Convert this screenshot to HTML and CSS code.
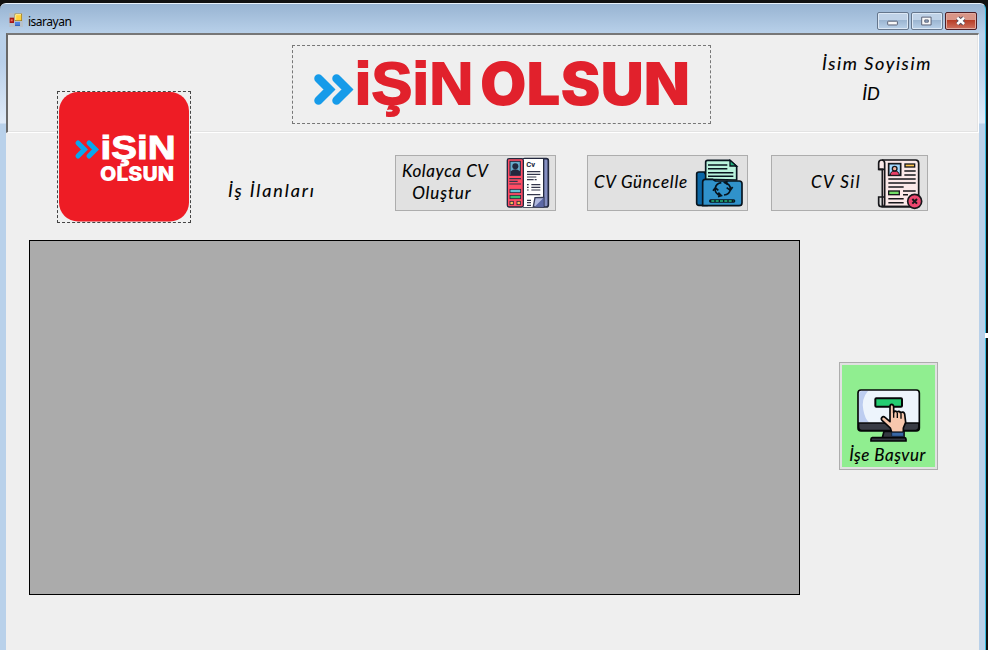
FILE: index.html
```html
<!DOCTYPE html>
<html lang="tr">
<head>
<meta charset="utf-8">
<title>isarayan</title>
<link rel="stylesheet" href="styles.css">
</head>
<body>
<div class="window">
  <div class="titlebar">
    <svg class="form-icon" viewBox="0 0 42 42"><rect width="42" height="42" fill="#bdbdbd" opacity=".6"/><rect x="2" y="14" width="13" height="16" fill="#a51616"/><rect x="5" y="19" width="6" height="6" fill="#ef6b5b"/><rect x="18" y="3" width="20" height="20" fill="#ffd23c" stroke="#9a7a17" stroke-width="2"/><path d="M20 21V5h16" stroke="#fff0a0" stroke-width="3" fill="none"/><rect x="18" y="27" width="15" height="11" fill="#4f83e0"/><path d="M18 37h15" stroke="#2558b8" stroke-width="3"/></svg>
    <span class="title">isarayan</span>
    <div class="controls">
      <span class="ctl"><svg viewBox="0 0 96 54"><rect x="31" y="26" width="31" height="12" rx="2" fill="#f8f8f8" stroke="#535b70" stroke-width="3"/></svg></span>
      <span class="ctl"><svg viewBox="0 0 96 54"><path d="M31 13h30v25H31zM41 22h11v7H41z" fill="#f8f8f8" fill-rule="evenodd" stroke="#535b70" stroke-width="3"/></svg></span>
      <span class="ctl close"><svg viewBox="0 0 96 54"><path d="M37 15L57 35M57 15L37 35" stroke="#574a5a" stroke-width="14"/><path d="M36 15L58 35M58 15L36 35" stroke="#fff" stroke-width="8"/></svg></span>
    </div>
  </div>
  <div class="client">
    <header class="header">
      <div class="brand">
        <svg viewBox="0 0 417 77">
          <g class="chevrons"><path d="M25.500 32.500l11 11-11 11M43.500 32.500l11 11-11 11"/></g>
          <g class="wordmark"><text class="slab" x="61.500" y="58" textLength="119" lengthAdjust="spacingAndGlyphs">iŞiN</text><text x="187" y="59" textLength="210" lengthAdjust="spacingAndGlyphs">OLSUN</text></g>
        </svg>
      </div>
      <div class="user"><span class="name">İsim Soyisim</span><span class="uid">İD</span></div>
    </header>
    <div class="app-logo">
      <svg viewBox="0 0 132 130">
        <rect x="1" y="0" width="130" height="129.500" rx="19" fill="#ee1c25"/>
        <path class="mini-chevrons" d="M20 51l6.500 6.500-6.500 6.500M31 51l6.500 6.500-6.500 6.500"/>
        <text class="mini-top" x="42.500" y="67" textLength="75" lengthAdjust="spacingAndGlyphs">iŞiN</text>
        <text class="mini-bottom" x="42" y="89" textLength="74" lengthAdjust="spacingAndGlyphs">OLSUN</text>
      </svg>
    </div>
    <div class="toolbar">
      <h1 class="heading">İş İlanları</h1>
      <button class="btn create"><span class="label"><span class="l1">Kolayca CV</span><span class="l2">Oluştur</span></span>
        <svg class="icon" viewBox="348 21 135 156" width="45" height="52">
          <rect x="398" y="26" width="77" height="145" rx="6" fill="#858fc2" stroke="#22283e" stroke-width="5"/>
          <path d="M399 27h62v116l-31 28h-31z" fill="#fff"/><path d="M461 27v143" stroke="#22283e" stroke-width="4"/>
          <path d="M430 170l5-27 26-1v29z" fill="#b0b9df" stroke="#343a57" stroke-width="4"/><path d="M434 170l27-27v28z" fill="#5c68a5"/>
          <rect x="352" y="26" width="48" height="145" rx="5" fill="#ff4c65" stroke="#22283e" stroke-width="4"/>
          <rect x="360" y="34" width="31" height="42" fill="#68aaca" stroke="#22283e" stroke-width="3"/><circle cx="376" cy="49" r="9" fill="#22283e"/><path d="M362 75V64q14-12 28 0v11z" fill="#22283e"/>
          <path d="M358 86h35M358 94h25M358 102h35M411 65h40M411 73h40M411 81h28M411 89h20M434 89h6M411 104h5M424 104h27M411 112h5M424 112h27M411 120h5M424 120h27M411 134h40M411 151h12M411 158h12M411 166h12" stroke="#33364b" stroke-width="3.500"/>
          <rect x="360" y="118" width="32" height="10" fill="#69bfd2" stroke="#22283e" stroke-width="2.500"/><rect x="360" y="136" width="32" height="10" fill="#37bd70" stroke="#22283e" stroke-width="2.500"/><rect x="360" y="154" width="10" height="10" fill="#ffbc55" stroke="#22283e" stroke-width="2.500"/><rect x="381" y="154" width="10" height="10" fill="#ffbc55" stroke="#22283e" stroke-width="2.500"/>
          <text class="cv" x="409" y="52">Cv</text>
        </svg></button>
      <button class="btn update"><span class="label">CV Güncelle</span>
        <svg class="icon" viewBox="345 27 147 150" width="49" height="50">
          <path d="M350 72q0-6 7-6h16l8 14v86h-24q-7 0-7-7z" fill="#0b67a5" stroke="#07141e" stroke-width="5"/>
          <path d="M377 88V36q0-5 6-5h67l20 19v40z" fill="#b9f3dc" stroke="#07141e" stroke-width="5"/><path d="M450 31v17h20z" fill="#20b07c" stroke="#07141e" stroke-width="4"/>
          <path d="M384 45h58M384 56h58M384 68h76M384 79h76" stroke="#07141e" stroke-width="4.500"/>
          <path d="M368 96q0-8 8-8h22l8 5h72q8 0 8 8v57q0 9-9 9H368z" fill="#3092cb" stroke="#07141e" stroke-width="5"/>
          <g fill="none" stroke="#07141e" stroke-width="5"><path d="M423 137q-20-5-17-23 2-13 18-16M399 122l7-9 9 8M433 98q19 4 18 20-2 15-19 17M440 113l11 8 7-10M415 128l9 9-10 3M443 104l-9-7 9-2"/></g>
          <rect x="387" y="148" width="79" height="10" rx="5" fill="#07141e"/><path d="M394 153h66" stroke="#24ba7c" stroke-width="4" stroke-dasharray="9 4"/>
        </svg></button>
      <button class="btn delete"><span class="label">CV Sil</span>
        <svg class="icon" viewBox="336 21 141 156" width="47" height="52">
          <path d="M356 27h96q9 0 9 10v130H352V55h-11V36q0-9 10-9z" fill="#fbe9e9" stroke="#17171b" stroke-width="5"/>
          <path d="M359 55V37q0-9-8-10M341 55h18v83M359 138h-18v20q0 9 9 9h100M359 138v20q0 9-8 9" fill="none" stroke="#17171b" stroke-width="5"/>
          <rect x="371" y="38" width="36" height="35" fill="#a2d9ff" stroke="#17171b" stroke-width="5"/><path d="M376 73q0-13 13-13t14 13z" fill="#e93f67" stroke="#17171b" stroke-width="3"/><circle cx="389" cy="53" r="7" fill="#f5b6a0" stroke="#17171b" stroke-width="4"/>
          <rect x="420" y="39" width="29" height="9" fill="#fec34e" stroke="#17171b" stroke-width="4"/><rect x="371" y="120" width="32" height="11" fill="#72de67" stroke="#17171b" stroke-width="4"/>
          <path d="M418 60h34M418 72h34M370 84h82M370 96h82M370 108h46M414 120h38M414 131h15M370 143h46M370 155h46" stroke="#17171b" stroke-width="4.500"/>
          <circle cx="449" cy="151" r="21" fill="#ed476f" stroke="#17171b" stroke-width="5"/><path d="M442 144l14 14M456 144l-14 14" stroke="#17171b" stroke-width="6"/>
        </svg></button>
    </div>
    <div class="content">
      <div class="listing"></div>
      <button class="apply">
        <svg viewBox="78 98 195 165" width="65" height="55">
          <path d="M127 247h97q4 0 4 5v5H123v-5q0-5 4-5zM162 228h60v19h-65z" fill="#343741" stroke="#050608" stroke-width="5"/>
          <rect x="84" y="104" width="184" height="123" rx="9" fill="#edf4fc" stroke="#050608" stroke-width="5"/>
          <path d="M87 201v-84q0-10 10-10h17q-21 24-14 57 5 27 17 37z" fill="#bdcdf0"/>
          <path d="M86 203h180v13q0 9-9 9H95q-9 0-9-9z" fill="#383b45" stroke="#050608" stroke-width="4"/>
          <rect x="136" y="129" width="80" height="25" rx="3" fill="#24cd72" stroke="#050608" stroke-width="6"/>
          <path d="M180 199v-45q0-7 5-7t6 7v18q3-8 10-2 7-5 10 2 10-5 13 4l3 25-7 17v13h-35l-4-13-25-23q-4-5 0-9t10 1z" fill="#f7c7ad" stroke="#050608" stroke-width="5" stroke-linejoin="round"/><path d="M191 172v15M202 172v16M213 174v16" stroke="#050608" stroke-width="4"/>
          <path d="M185 231h36v12h-36z" fill="#3867a5" stroke="#18263d" stroke-width="3"/>
        </svg>
        <span>İşe Başvur</span>
      </button>
    </div>
  </div>
  <i class="grip"></i>
</div>
</body>
</html>
```
FILE: styles.css
```css
* { box-sizing: border-box; }
body { margin: 0; width: 988px; height: 650px; overflow: hidden; background: #111; }
.window { position: relative; width: 986px; height: 647px; margin-top: 3px; padding: 0 6px; border-top: 1px solid #e8f2fb; border-right: 1px solid #37bce0; border-radius: 6px 6px 0 0; background: linear-gradient(#98b4d2 0, #b9d1ea 30px, #b9d0ea 58px, #e0ebf8 119px, #b9d1ea 120px); }
.titlebar { display: flex; align-items: center; height: 29px; padding: 3px 2px 0 3px; }
.form-icon { width: 14px; height: 14px; }
.title { margin: 3px 0 0 5px; font: 12px "Noto Sans", sans-serif; letter-spacing: -.500px; color: #000; }
.controls { display: flex; gap: 2px; margin-left: auto; margin-top: 2px; }
.ctl { width: 32px; height: 18px; border: 1px solid #65768c; border-radius: 2px; box-shadow: inset 0 0 0 1px #dce8f5; background: linear-gradient(#bfd2e7 0 45%, #9bb5d1 46%, #b9d1e9); }
.ctl svg { display: block; width: 30px; height: 17px; }
.ctl.close { border-color: #4e1d24; box-shadow: inset 0 0 0 1px #dfaaa0; background: linear-gradient(#d99587 0 45%, #b73d26 46%, #cf7260); }
.client { position: relative; width: 973px; height: 618px; background: #efefef; }
.header { display: flex; height: 100px; border: solid; border-width: 2px 1px 1px 2px; border-color: #696969 #fff #fff #696969; border-top-color: #777; box-shadow: inset -1px -1px #e3e3e3; padding: 10px 45px 0 284px; }
.brand { width: 419px; height: 79px; border: 1px dashed #777; }
.brand svg, .app-logo svg { display: block; width: 100%; height: 100%; }
.chevrons, .mini-chevrons { fill: none; stroke: #169be9; stroke-width: 8.500; stroke-linecap: round; stroke-linejoin: miter; }
.mini-chevrons { stroke: #08a7ed; stroke-width: 5; }
.wordmark { font: 900 59px Inter, sans-serif; fill: #e1212c; }
.slab { font: bold 59px "Liberation Sans", sans-serif; stroke: #e1212c; stroke-width: 1.800; }
.mini-top { font: bold 34px "Liberation Sans", sans-serif; fill: #fff; stroke: #fff; stroke-width: 1; }
.mini-bottom { font: 900 20.500px Inter, sans-serif; fill: #fff; }
.user, .heading, .btn, .apply { font: italic 17px Lato, sans-serif; color: #000; -webkit-text-stroke: .12px #000; }
.icon { -webkit-text-stroke: 0; }
.user { display: flex; flex-direction: column; align-items: center; width: 112px; margin-left: auto; padding-top: 8px; line-height: 20px; gap: 10px; white-space: nowrap; }
.name { font-size: 18px; letter-spacing: 1.600px; }
.uid { font-size: 18px; margin-right: 12px; }
.app-logo { position: absolute; left: 51px; top: 58px; width: 134px; height: 132px; border: 1px dashed #444; background: #efefef; }
.toolbar { display: flex; height: 107px; padding-top: 22px; padding-left: 222px; }
.heading { width: 167px; margin: 24px 0 0; font-size: 18px; line-height: 22px; letter-spacing: 1.900px; }
.btn { display: flex; align-items: center; justify-content: space-between; width: 161px; height: 56px; padding: 0 4px 0 6px; border: 1px solid #adadad; background: #e1e1e1; line-height: 22px; }
.label { white-space: nowrap; letter-spacing: .900px; }
.icon { flex: none; display: block; }
.create .label { display: flex; flex-direction: column; align-items: center; margin-top: -2px; }
.create .l1 { letter-spacing: .600px; }
.create .l2 { margin-right: 7px; }
.update .icon, .delete .icon { position: relative; top: 1px; }
.update { margin-left: 31px; padding-right: 3px; }
.update .label { letter-spacing: .750px; }
.delete { width: 157px; margin-left: 23px; padding: 0 3px 0 39px; }
.delete .label { letter-spacing: 1.500px; }
.update .label, .delete .label { margin-top: -2px; }
.cv { font: bold 23px Roboto, sans-serif; fill: #22283e; }
.content { display: flex; align-items: flex-start; padding-left: 23px; }
.listing { width: 771px; height: 355px; border: 1px solid #000; background: #ababab; }
.apply { display: flex; flex-direction: column; align-items: center; width: 99px; height: 108px; margin: 122px 0 0 39px; padding: 25px 0 0; border: 1px solid #adadad; box-shadow: inset 0 0 0 2px #e1e1e1; background: #90ee90; }
.apply span { margin: 2px 2px 0 0; line-height: 20px; letter-spacing: .500px; white-space: nowrap; }
.grip { position: absolute; right: -3px; top: 329px; width: 3px; height: 5px; background: #fff; }
```
